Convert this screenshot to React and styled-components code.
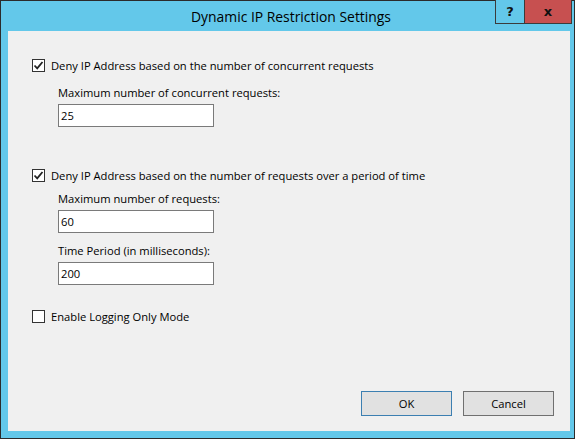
import React from 'react';
import styled, { createGlobalStyle } from 'styled-components';

const GlobalStyle = createGlobalStyle`
  html, body {
    margin: 0;
    padding: 0;
    background: #ffffff;
  }

  body {
    font-family: "Open Sans", "Liberation Sans", sans-serif;
    font-size: 11.2px;
    color: #000;
  }
`;

const Window = styled.div`
  width: 575px;
  height: 439px;
  box-sizing: border-box;
  border: 1px solid #2b2b2b;
  background: #63c8ea;
  display: flex;
  flex-direction: column;
  padding: 0 4px 7px 7px;
`;

const TitleBar = styled.div`
  height: 30px;
  flex-shrink: 0;
  position: relative;
  display: flex;
  align-items: center;
  justify-content: center;
`;

const Title = styled.div`
  font-size: 13.9px;
  color: #000;
  margin-top: 0;
  margin-left: 4px;
`;

const Controls = styled.div`
  position: absolute;
  top: -1px;
  right: -2px;
  display: flex;
  height: 23px;
  border: 1px solid #3b3b3b;
  border-top: none;
`;

const CtrlButton = styled.div`
  width: ${(p) => p.$w}px;
  height: 100%;
  display: flex;
  align-items: center;
  justify-content: center;
  background: ${(p) => p.$bg};
  font-family: "DejaVu Sans", sans-serif;
  font-weight: bold;
  font-size: 13px;
  color: #111;

  & + & {
    border-left: 1px solid #3b3b3b;
  }
`;

const Client = styled.div`
  flex: 1;
  background: #f0f0f0;
  display: flex;
  flex-direction: column;
  padding: 0 16px 15px 24px;
`;

const CheckRow = styled.label`
  display: flex;
  align-items: center;
  gap: 6px;
  height: 13px;
  margin-top: ${(p) => p.$top}px;
  line-height: 13px;
`;

const Box = styled.span`
  width: 13px;
  height: 13px;
  box-sizing: border-box;
  border: 1px solid #333;
  background: #fff;
  display: flex;
  align-items: center;
  justify-content: center;
  flex-shrink: 0;
`;

const Field = styled.div`
  margin-left: 26px;
  display: flex;
  flex-direction: column;
`;

const FieldLabel = styled.div`
  height: 15px;
  line-height: 15px;
  margin-top: ${(p) => p.$top}px;
`;

const Input = styled.div`
  width: 156px;
  height: 23px;
  box-sizing: border-box;
  border: 1px solid #7a7a7a;
  background: #fff;
  margin-top: 4px;
  padding-left: 2px;
  display: flex;
  align-items: center;
`;

const Footer = styled.div`
  margin-top: auto;
  display: flex;
  justify-content: flex-end;
  gap: 11px;
`;

const Button = styled.div`
  width: 91px;
  height: 25px;
  box-sizing: border-box;
  border: 1px solid ${(p) => (p.$default ? '#3c7fb1' : '#707070')};
  background: #e1e1e1;
  display: flex;
  align-items: center;
  justify-content: center;
`;

const Check = () => (
  <svg width="11" height="11" viewBox="0 0 11 11">
    <path d="M1.5 5.5 L4.2 8.3 L9.5 2" fill="none" stroke="#222" strokeWidth="1.8" />
  </svg>
);

const CheckBox = ({ checked, top, children }) => (
  <CheckRow $top={top}>
    <Box>{checked && <Check />}</Box>
    <span>{children}</span>
  </CheckRow>
);

export default function App() {
  return (
    <>
      <GlobalStyle />
      <Window>
        <TitleBar>
          <Title>Dynamic IP Restriction Settings</Title>
          <Controls>
            <CtrlButton $w={28} $bg="#63c8ea">?</CtrlButton>
            <CtrlButton $w={46} $bg="#c75050">x</CtrlButton>
          </Controls>
        </TitleBar>
        <Client>
          <CheckBox checked top={28}>Deny IP Address based on the number of concurrent requests</CheckBox>
          <Field>
            <FieldLabel $top={13}>Maximum number of concurrent requests:</FieldLabel>
            <Input>25</Input>
          </Field>
          <CheckBox checked top={42}>Deny IP Address based on the number of requests over a period of time</CheckBox>
          <Field>
            <FieldLabel $top={9}>Maximum number of requests:</FieldLabel>
            <Input>60</Input>
            <FieldLabel $top={10}>Time Period (in milliseconds):</FieldLabel>
            <Input>200</Input>
          </Field>
          <CheckBox top={25}>Enable Logging Only Mode</CheckBox>
          <Footer>
            <Button $default>OK</Button>
            <Button>Cancel</Button>
          </Footer>
        </Client>
      </Window>
    </>
  );
}
